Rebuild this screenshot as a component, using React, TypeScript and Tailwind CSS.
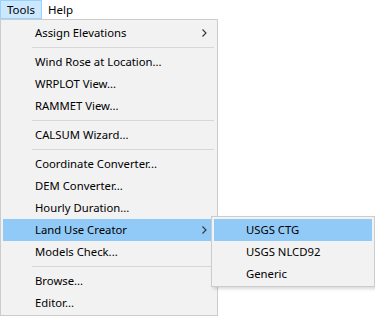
import React from 'react'

type Item = { label: string; sub?: boolean; active?: boolean } | 'sep'

const items: Item[] = [
    { label: 'Assign Elevations', sub: true },
    'sep',
    { label: 'Wind Rose at Location...' },
    { label: 'WRPLOT View...' },
    { label: 'RAMMET View...' },
    'sep',
    { label: 'CALSUM Wizard...' },
    'sep',
    { label: 'Coordinate Converter...' },
    { label: 'DEM Converter...' },
    { label: 'Hourly Duration...' },
    { label: 'Land Use Creator', sub: true, active: true },
    { label: 'Models Check...' },
    'sep',
    { label: 'Browse...' },
    { label: 'Editor...' },
]

const subItems = [
    { label: 'USGS CTG', active: true },
    { label: 'USGS NLCD92' },
    { label: 'Generic' },
]

const Chevron = () => (
    <svg width="5" height="8" viewBox="0 0 5 8" className="text-[#333]">
        <path d="M0.5 0.5 L4 4 L0.5 7.5" fill="none" stroke="currentColor" strokeWidth="1.1" />
    </svg>
)

const MenuRow = ({ label, sub, active }: { label: string; sub?: boolean; active?: boolean }) => (
    <div className={`h-[22px] flex items-center pl-[32px] pr-[8px] ${active ? 'bg-[#91c9f7]' : ''}`}>
        <span className="flex-1 leading-none">{label}</span>
        {sub && <Chevron />}
    </div>
)

const App = () => {
    return (
        <div className="w-[375px] h-[317px] bg-white text-[11.3px] text-black overflow-hidden" style={{ fontFamily: '"Segoe UI", "Noto Sans", sans-serif' }}>
            <div className="h-[19px] flex items-stretch text-[11.5px]">
                <div className="w-[42px] flex items-center pl-[6px] bg-[#cce8ff] border border-[#99d1ff]">Tools</div>
                <div className="flex items-center pl-[6px]">Help</div>
            </div>
            <div className="relative">
                <div className="w-[218px] h-[297px] bg-[#f2f2f2] border border-[#cccccc] pt-[2px] pb-[1px] px-[2px]">
                    {items.map((it, i) =>
                        it === 'sep' ? (
                            <div key={i} className="h-[7px] flex items-center pl-[29px] pr-[1px]">
                                <div className="h-px w-full bg-[#d7d7d7]" />
                            </div>
                        ) : (
                            <MenuRow key={i} {...it} />
                        )
                    )}
                </div>
                <div className="absolute left-[211px] top-[197px] w-[164px] h-[71px] bg-[#f2f2f2] border border-[#cccccc] p-[2px] shadow-[2px_2px_3px_rgba(0,0,0,0.15)]">
                    {subItems.map((s) => (
                        <MenuRow key={s.label} {...s} />
                    ))}
                </div>
            </div>
        </div>
    )
}

export default App
